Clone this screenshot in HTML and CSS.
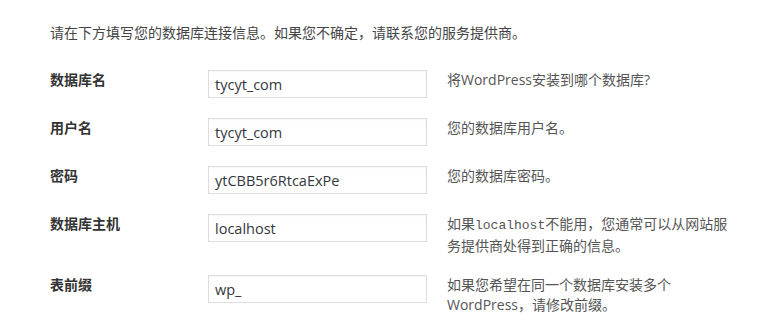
FILE: index.html
```html
<!DOCTYPE html>
<html lang="zh-CN">
<head>
  <meta charset="UTF-8" />
  <title>数据库连接信息</title>
  <link rel="stylesheet" href="styles.css">
</head>
<body>
  <form class="setup">
    <p class="intro">请在下方填写您的数据库连接信息。如果您不确定，请联系您的服务提供商。</p>
    <div class="form-table">
      <div class="row">
        <label class="label" for="dbname">数据库名</label>
        <input class="field" id="dbname" type="text" value="tycyt_com" />
        <div class="desc">将WordPress安装到哪个数据库?</div>
      </div>
      <div class="row">
        <label class="label" for="uname">用户名</label>
        <input class="field" id="uname" type="text" value="tycyt_com" />
        <div class="desc">您的数据库用户名。</div>
      </div>
      <div class="row">
        <label class="label" for="pwd">密码</label>
        <input class="field" id="pwd" type="text" value="ytCBB5r6RtcaExPe" />
        <div class="desc">您的数据库密码。</div>
      </div>
      <div class="row">
        <label class="label" for="dbhost">数据库主机</label>
        <input class="field" id="dbhost" type="text" value="localhost" />
        <div class="desc">如果<code>localhost</code>不能用，您通常可以从网站服务提供商处得到正确的信息。</div>
      </div>
      <div class="row">
        <label class="label" for="prefix">表前缀</label>
        <input class="field" id="prefix" type="text" value="wp_" />
        <div class="desc">如果您希望在同一个数据库安装多个WordPress，请修改前缀。</div>
      </div>
    </div>
  </form>
</body>
</html>
```

FILE: styles.css
```css
* { box-sizing: border-box; margin: 0; padding: 0; }
body {
  font-family: 'Open Sans', 'Noto Sans CJK SC', sans-serif;
  font-size: 14px;
  line-height: 20px;
  color: #444;
  background: #fff;
}
.setup {
  padding: 23px 0 0 50px;
}
.intro {
  margin-bottom: 17px;
}
.row {
  display: grid;
  grid-template-columns: 158px 219px 306px;
  align-items: start;
  padding: 10px 0;
}
.row:nth-child(4) {
  padding-bottom: 9px;
}
.label {
  font-weight: 700;
  color: #333;
}
.field {
  width: 219px;
  height: 28px;
  padding: 0 6px;
  border: 1px solid #ddd;
  box-shadow: inset 0 1px 2px rgba(0,0,0,0.04);
  font-family: 'Open Sans', 'Noto Sans CJK SC', sans-serif;
  font-size: 14.5px;
  color: #32373c;
  background: #fff;
  outline: none;
}
.desc {
  padding-left: 20px;
  color: #555;
}
.desc code {
  font-family: 'Liberation Mono', monospace;
  font-size: 13px;
}
```
